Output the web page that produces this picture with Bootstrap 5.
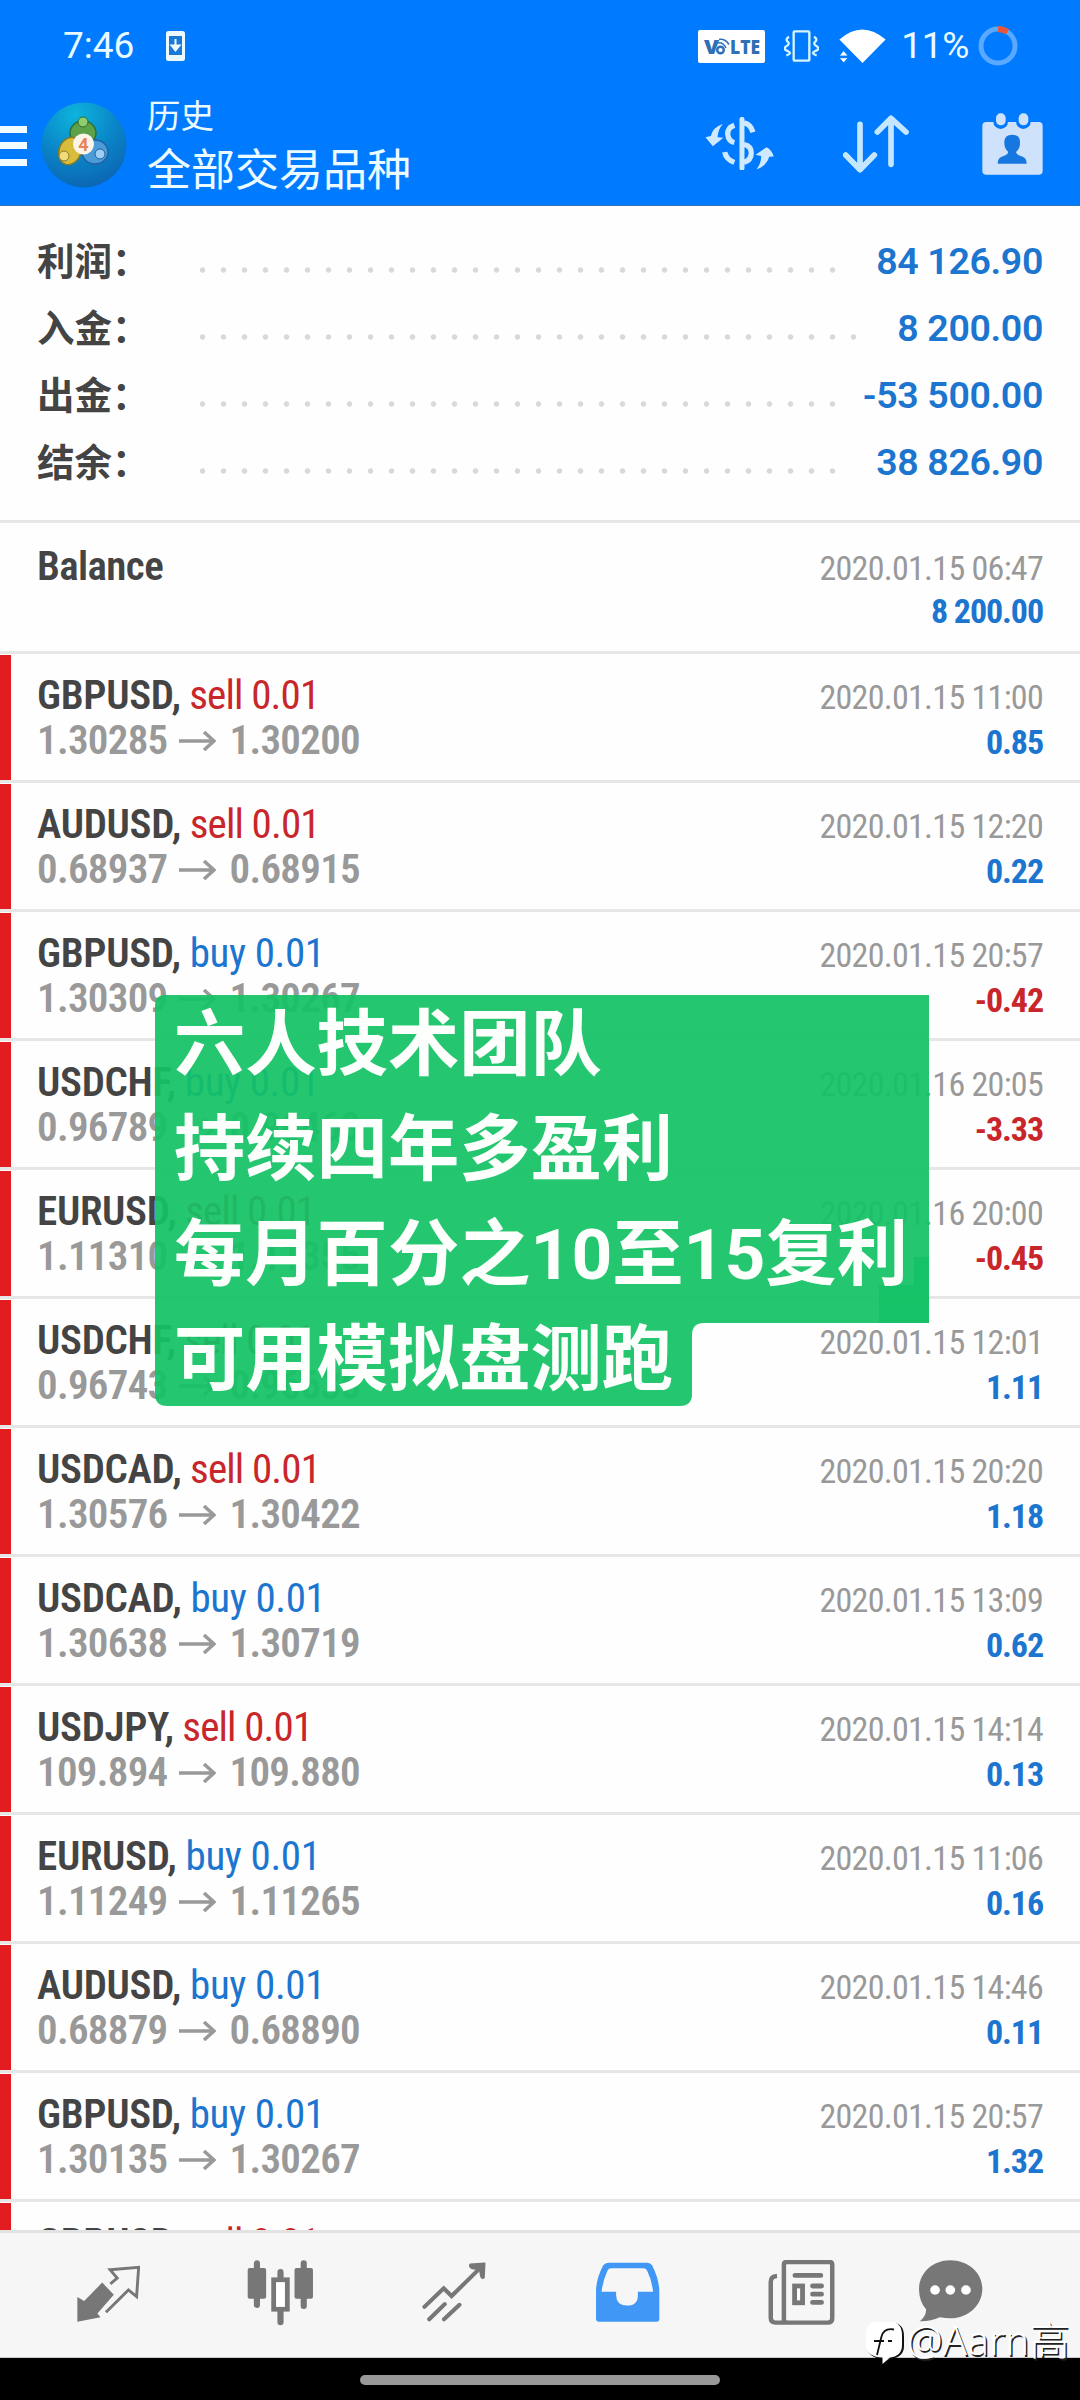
<!DOCTYPE html>
<html lang="zh-CN">
<head>
<meta charset="utf-8">
<meta name="viewport" content="width=device-width, initial-scale=1">
<title>历史 - 全部交易品种</title>
<link href="https://cdn.jsdelivr.net/npm/bootstrap@5.3.0/dist/css/bootstrap.min.css" rel="stylesheet">
<style>
body{width:1080px;height:2400px;overflow:hidden;background:#fefefe;color:#444;font-family:Roboto,"Noto Sans CJK SC",sans-serif}
svg{display:block;flex:none}
.topbar{height:206px;background:#007aff;color:#e8fbff;border-bottom:1px solid #2a74c4}
.statusline{height:92px;padding:0 62px 0 63px;font-size:37px;line-height:92px}
.phone-ic{margin-left:32px}
.toolbar{height:103px;padding-right:37px}
.burger{width:27px;height:40px;margin-top:4px}
.burger i{display:block;height:7px;background:#f0fcff}
.logo{margin-left:14px;margin-top:3px}
.titles{margin-left:20px;color:#ecfbff;font-family:"Noto Sans CJK SC",sans-serif}
.t1{font-size:33.5px;line-height:46px}
.t2{font-size:44px;line-height:60px}
.summary{height:314px;padding:22px 37px 0 37px}
.sumrow{height:67px;font-size:37.5px}
.sumlabel{width:155px;font-family:"Noto Sans CJK SC",sans-serif;font-weight:700;font-size:37.5px;line-height:61px}
.dots{height:8px;margin-top:17px;width:651px;background:radial-gradient(circle at 50% 50%,#d9d9d9 2.3px,transparent 3.2px) 0 0/21px 8px repeat-x}
.dots.wide{width:672px}
.amt{font-weight:650;color:#1c75cf;line-height:67px;white-space:pre;letter-spacing:-.35px}
.deals{font-stretch:75%;height:1710px;overflow:hidden}
.deal{height:129px;border-top:3px solid #e6e6e6;padding-right:37px}
.deal.first{height:131px}
.bar{width:11px;margin-top:1px;height:125px;background:#e31c1f}
.first .bar{background:none}
.deal .body{padding:19px 0 0 26px}
.first .body{padding-top:21px}
.ln{height:45px;line-height:45px;font-size:41px;white-space:pre}
.sym{font-weight:600;color:#444;letter-spacing:-.3px}
.sell{color:#c9262b}
.buy{color:#1c75cf}
.kind.sell{letter-spacing:-.85px}
.kind.buy{letter-spacing:-.4px}
.price{font-weight:600;color:#999;letter-spacing:-.7px}
.price svg{margin:0 14px 0 11px}
.when{color:#999;font-size:34px;letter-spacing:-.72px}
.res{font-weight:700;font-size:34px;letter-spacing:-1.1px}
.tabs{height:128px;background:#f6f6f7;border-top:3px solid #e2e2e2;border-bottom:1px solid #ccc;padding:0 0 0 76px}
.homebar{height:42px;background:#000}
.pill{width:360px;height:10px;border-radius:5px;background:#999;margin-bottom:6px}
.note{left:155px;top:995px}
.note .txt{left:19px;top:-3px;color:#fcfffc;font-family:Roboto,"Noto Sans CJK SC",sans-serif;font-weight:700;font-size:71.3px;line-height:105px;white-space:nowrap}
.sign{left:866px;top:2316px;color:#fff}
.sign span{font-family:"Noto Sans","Noto Sans CJK SC",sans-serif;font-weight:300;font-size:40px;line-height:44px;letter-spacing:.3px;margin-left:3px;text-shadow:1.5px 1.5px 0 #222;white-space:nowrap}
</style>
</head>
<body class="position-relative">
<header class="topbar">
  <div class="statusline d-flex align-items-center">
    <span>7:46</span>
    <svg class="phone-ic me-auto" width="19" height="30" viewBox="0 0 19 30"><rect width="19" height="30" rx="2.500" fill="#eafaff"/><rect x="3" y="5" width="13" height="19" fill="#1c78d6"/><path d="M9.500 8v9M5.500 14.500l4 5 4-5z" stroke="#eafaff" stroke-width="2" fill="#eafaff"/></svg>
    <svg width="67" height="33" viewBox="0 0 67 33"><rect width="67" height="33" rx="2" fill="#fff"/><g fill="#2f6fb5" font-family="Open Sans" font-weight="800"><text x="6" y="24" font-size="19" textLength="15" lengthAdjust="spacingAndGlyphs">V</text><text x="32" y="24" font-size="19" textLength="30" lengthAdjust="spacingAndGlyphs">LTE</text></g><circle cx="22.500" cy="20" r="3.300" fill="none" stroke="#2f6fb5" stroke-width="2.400"/><path d="M20 13q5-1 8 5M21 9.500q6-1 10 5" fill="none" stroke="#2f6fb5" stroke-width="1.500"/></svg>
    <svg style="margin-left:19px" width="35" height="32" viewBox="0 0 105 96" fill="none" stroke="#d5f6ff" stroke-width="7"><rect x="29" y="4" width="47" height="88" rx="3"/><path d="M15 20q-12 8-4 15t-4 14t4 14t-4 13M90 20q12 8 4 15t4 14t-4 14t4 13"/></svg>
    <svg style="margin-left:20px" width="47" height="34" viewBox="0 0 142 103" fill="#fff"><path d="M1 32Q70-29 141 32L71 103z"/><path d="M0 82l14-17 14 17zM0 87l14 16 14-16z" stroke="#007aff" stroke-width="3"/></svg>
    <span style="margin-left:15px;letter-spacing:-.3px">11%</span>
    <svg style="margin-left:9px" width="40" height="40" viewBox="0 0 40 40" fill="none" stroke-width="5"><circle cx="20" cy="20" r="17" stroke="#58a9ff"/><path d="M20 3A17 17 0 0 1 29.500 6" stroke="#e8553d" stroke-width="6"/></svg>
  </div>
  <div class="toolbar d-flex align-items-center">
    <div class="burger d-flex flex-column justify-content-between"><i></i><i></i><i></i></div>
    <svg class="logo" width="86" height="86" viewBox="0 0 86 86"><defs><radialGradient id="lg" cx=".4" cy=".15" r=".95"><stop offset="0" stop-color="#0db4dc"/><stop offset=".5" stop-color="#0a86c8"/><stop offset="1" stop-color="#0b5fae"/></radialGradient></defs><circle cx="43" cy="43" r="42.500" fill="url(#lg)"/><ellipse cx="42" cy="31" rx="13" ry="12" fill="#5da24a" stroke="#2f6f37" stroke-width="1.500"/><ellipse cx="29" cy="49" rx="11" ry="14" fill="#d8bd3c" stroke="#7f7a2a" stroke-width="1.500" transform="rotate(20 29 49)"/><ellipse cx="54" cy="50" rx="13" ry="12" fill="#4b9bd8" stroke="#22619f" stroke-width="1.500"/><circle cx="42" cy="20" r="5" fill="#8fce6a" stroke="#2f6f37"/><circle cx="23" cy="54" r="5" fill="#f0dc78" stroke="#8a7a2a"/><circle cx="59" cy="52" r="5" fill="#9bd0f4" stroke="#22619f"/><circle cx="42.500" cy="42" r="10.500" fill="#fbf4e8"/><text x="42.500" y="48.500" font-family="Roboto" font-weight="700" font-size="18" fill="#e8845a" text-anchor="middle">4</text></svg>
    <div class="titles"><div class="t1">历史</div><div class="t2">全部交易品种</div></div>
    <svg class="ms-auto" width="69" height="53" viewBox="46 284 207 160" fill="none" stroke="#cfeaff" stroke-width="12"><path d="M157 291V438" stroke-width="15" stroke-linecap="round"/><path d="M163 302q20 4 27 28M163 367q22 4 22 26t-22 28M134 309q-22 8-20 28t20 24M105 390q4 22 29 31" stroke-width="16"/><path d="M47 345l16-4q6-26 36-36q-14 16-16 40l18 2-32 25z" fill="#cfeaff" stroke="none"/><path d="M253 403l-14 1q-8 28-38 38q14-18 14-40l-17-4 33-23q16 8 22 28z" fill="#cfeaff" stroke="none"/></svg>
    <svg style="margin-left:69px" width="66" height="58" viewBox="460 280 198 174" fill="none" stroke="#c4e6ff" stroke-width="17" stroke-linecap="round" stroke-linejoin="round"><path d="M511 308V442M468 400l43 44 43-44M604 428V292M563 331l41-41 45 41"/></svg>
    <svg style="margin-left:73px" width="61" height="62" viewBox="876 274 183 186" fill="#cfe2fb"><rect x="877" y="301" width="181" height="158" rx="12"/><circle cx="932" cy="300" r="22" fill="#007aff"/><circle cx="1000" cy="300" r="22" fill="#007aff"/><rect x="918" y="275" width="29" height="36" rx="14"/><rect x="986" y="275" width="29" height="36" rx="14"/><path d="M967 339q24 0 23 24q0 18-12 28q2 10 20 14q12 4 12 21h-87q0-17 12-21q18-4 20-14q-12-10-12-28q-1-24 24-24z" fill="#1677e0"/></svg>
  </div>
</header>

<section class="summary">
  <div class="sumrow d-flex"><div class="sumlabel">利润：</div><div class="dots align-self-center"></div><div class="amt ms-auto">84 126.90</div></div>
  <div class="sumrow d-flex"><div class="sumlabel">入金：</div><div class="dots wide align-self-center"></div><div class="amt ms-auto">8 200.00</div></div>
  <div class="sumrow d-flex"><div class="sumlabel">出金：</div><div class="dots align-self-center"></div><div class="amt ms-auto">-53 500.00</div></div>
  <div class="sumrow d-flex"><div class="sumlabel">结余：</div><div class="dots align-self-center"></div><div class="amt ms-auto">38 826.90</div></div>
</section>

<main class="deals" id="deals">
  <div class="deal first d-flex"><div class="bar"></div><div class="body flex-grow-1">
    <div class="ln d-flex justify-content-between align-items-baseline"><span class="sym" style="letter-spacing:-.6px">Balance</span><span class="when">2020.01.15 06:47</span></div>
    <div class="ln d-flex justify-content-end align-items-baseline"><span class="res buy">8 200.00</span></div>
  </div></div>
</main>

<nav class="tabs d-flex align-items-start">
  <svg style="margin-top:32px" width="64" height="58" viewBox="218 195 188 172" preserveAspectRatio="none"><path d="M222 290l20 12 53-55 34 36-48 56 9 11-68 13z" fill="#777"/><path d="M319 251l20-17-21-25 84-7-6 87-24-20-66 66" fill="none" stroke="#777" stroke-width="8.500"/></svg>
  <svg style="margin-left:107px;margin-top:27px" width="67" height="66" viewBox="716 182 196 197" preserveAspectRatio="none" fill="#777"><g stroke="#777" stroke-width="18" stroke-linecap="round"><path d="M745 192v124M882 192v127M814 218v26M814 336v32"/></g><rect x="718" y="206" width="54" height="92" rx="6"/><rect x="855" y="206" width="54" height="92" rx="6"/><rect x="794" y="241" width="40" height="88" fill="#fff" stroke="#777" stroke-width="14"/></svg>
  <svg style="margin-left:108px;margin-top:29px" width="64" height="60" viewBox="1224 187 186 178" preserveAspectRatio="none" fill="none" stroke="#777" stroke-width="12" stroke-linecap="round"><path d="M1231 320l56-55 23 23 82-82M1245 357l45-45M1288 357l45-43"/><path d="M1364 194l42-3-2 42q-6 5-9-5l-3-18-22-4q-10-4-6-12z" fill="#777" stroke-width="5" stroke-linejoin="round"/></svg>
  <svg style="margin-left:109px;margin-top:29px" width="65" height="60" viewBox="160 187 188 179" preserveAspectRatio="none"><path d="M199 189h112q10 0 14 8 20 40 21 76v85q0 7-7 7H170q-7 0-7-7v-85q0-36 21-76 5-8 15-8z" fill="#4097f5"/><path d="M207 206h92q9 0 12 7 14 30 17 63h-44v10q0 31-31 31t-32-31v-10h-42q3-32 17-63 3-7 11-7z" fill="#f6f6f7"/></svg>
  <svg style="margin-left:108px;margin-top:27px" width="67" height="65" viewBox="664 182 194 190" preserveAspectRatio="none" fill="none" stroke="#777"><path d="M710 365V196q0-8 8-8h124q8 0 8 8v156q0 13-13 13H686q-14 0-14-14V246q0-16 18-17" stroke-width="13"/><path d="M710 348q0 12 12 16" stroke-width="6"/><rect x="741" y="258" width="23" height="49" stroke-width="14" fill="#fff"/><path d="M742 227h75M793 258h26M793 282h26M793 306h26" stroke-width="14" stroke-linecap="round"/></svg>
  <svg style="margin-left:83px;margin-top:27px" width="65" height="62" viewBox="1100 181 187 186" preserveAspectRatio="none"><path d="M1193 182c52 0 92 38 92 86s-40 88-92 88q-14 0-30-3-28 13-58 12 20-18 18-36-20-24-20-60c0-48 38-87 90-87z" fill="#777"/><g fill="#fff"><circle cx="1149" cy="271" r="14"/><circle cx="1193" cy="271" r="14"/><circle cx="1238" cy="271" r="14"/></g></svg>
</nav>
<div class="homebar d-flex align-items-center justify-content-center"><div class="pill mt-2"></div></div>

<div class="note position-absolute">
  <svg width="775" height="412" viewBox="0 0 775 412"><path d="M10 0H774V328H549Q537 328 537 340V399Q537 411 525 411H12Q0 411 0 399V10Q0 0 10 0z" fill="#14c266" fill-opacity=".935"/><path d="M724 290h35v-28h15v66h-50z" fill="#0dbf60" fill-opacity=".6"/></svg>
  <div class="txt position-absolute">六人技术团队<br>持续四年多盈利<br>每月百分之10至15复利<br>可用模拟盘测跑</div>
</div>

<div class="sign position-absolute d-flex align-items-center">
  <svg class="mt-1" width="38" height="44" viewBox="0 0 38 44"><path d="M12 3h14q12 0 12 13v10q0 11-13 13l-8 5v-5q-16-1-16-14V16Q1 3 12 3z" fill="#111"/><path d="M12 2h12q12 0 12 13v10q0 11-12 12.500L16.500 44v-6.500Q0 37 0 24V15Q0 2 12 2z" fill="#fff"/><path d="M28 9.500q-10-2-12.500 7L11 35M8 21h10M22 21h4" fill="none" stroke="#111" stroke-width="1.800"/></svg>
  <span>@Aarn高</span>
</div>

<script>
const deals=[
["GBPUSD","sell","1.30285","1.30200","2020.01.15 11:00","0.85"],
["AUDUSD","sell","0.68937","0.68915","2020.01.15 12:20","0.22"],
["GBPUSD","buy","1.30309","1.30267","2020.01.15 20:57","-0.42"],
["USDCHF","buy","0.96789","0.96468","2020.01.16 20:05","-3.33"],
["EURUSD","sell","1.11310","1.11355","2020.01.16 20:00","-0.45"],
["USDCHF","sell","0.96743","0.96636","2020.01.15 12:01","1.11"],
["USDCAD","sell","1.30576","1.30422","2020.01.15 20:20","1.18"],
["USDCAD","buy","1.30638","1.30719","2020.01.15 13:09","0.62"],
["USDJPY","sell","109.894","109.880","2020.01.15 14:14","0.13"],
["EURUSD","buy","1.11249","1.11265","2020.01.15 11:06","0.16"],
["AUDUSD","buy","0.68879","0.68890","2020.01.15 14:46","0.11"],
["GBPUSD","buy","1.30135","1.30267","2020.01.15 20:57","1.32"],
["GBPUSD","sell","","","",""]];
const arrow='<svg width="37" height="20" viewBox="0 0 37 20" fill="none" stroke="#999" stroke-width="3.500"><path d="M0 10h35M25 1l10 9-10 9"/></svg>';
document.getElementById('deals').insertAdjacentHTML('beforeend',deals.map(([s,k,a,b,t,r])=>`
<div class="deal d-flex"><div class="bar"></div><div class="body flex-grow-1">
<div class="ln d-flex justify-content-between align-items-baseline"><span><span class="sym">${s},</span><span class="kind ${k}"> ${k} 0.01</span></span><span class="when">${t}</span></div>
${a?`<div class="ln d-flex justify-content-between align-items-baseline"><span class="price d-flex align-items-center"><span>${a}</span>${arrow}<span>${b}</span></span><span class="res ${r[0]==='-'?'sell':'buy'}">${r}</span></div>`:''}
</div></div>`).join(''));
</script>
<script src="https://cdn.jsdelivr.net/npm/bootstrap@5.3.0/dist/js/bootstrap.bundle.min.js"></script>
</body>
</html>
